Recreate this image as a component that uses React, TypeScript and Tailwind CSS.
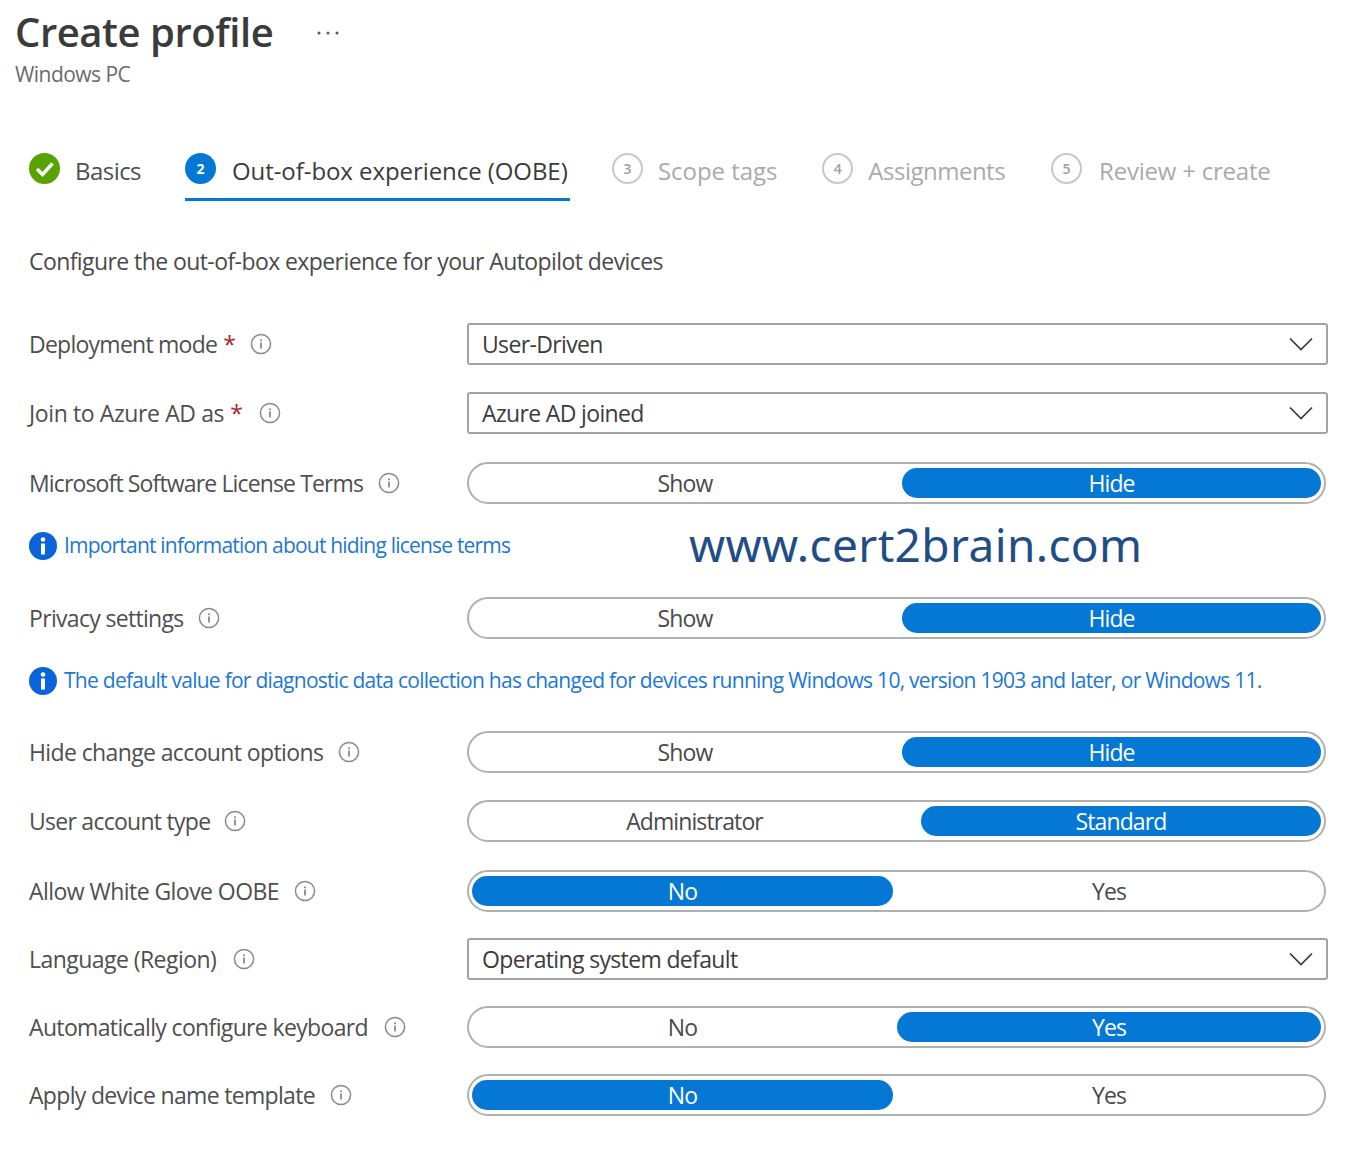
import { ReactNode } from 'react';

const BLUE = 'bg-[#0478d4]';

function InfoIcon() {
  return (
    <svg width="22" height="22" viewBox="0 0 22 22" className="shrink-0">
      <circle cx="11" cy="11" r="9.6" fill="none" stroke="#8a8a8a" strokeWidth="1.5" />
      <rect x="10.1" y="9.5" width="1.8" height="6" fill="#8a8a8a" />
      <rect x="10.1" y="6.4" width="1.8" height="1.8" fill="#8a8a8a" />
    </svg>
  );
}

function Label({ text, required, gap, tracking }: { text: string; required?: boolean; gap: string; tracking: string }) {
  return (
    <div className={`w-[438px] shrink-0 flex items-center text-[#4f4f4f] text-[23px] ${tracking}`}>
      <span>{text}</span>
      {required && <span className="ml-[6px] text-[#a4262c]">*</span>}
      <span className={gap}>
        <InfoIcon />
      </span>
    </div>
  );
}

function Row({ children, className }: { children: ReactNode; className: string }) {
  return <div className={`flex items-center ${className}`}>{children}</div>;
}

function Select({ value }: { value: string }) {
  return (
    <div className="w-[861px] h-[42px] border-2 border-[#a3a3a3] rounded-[3px] flex items-center justify-between pl-[13px] pr-[13px] text-[#3c3c3c] text-[23px] tracking-[-0.65px]">
      <span>{value}</span>
      <svg width="24" height="14" viewBox="0 0 24 14">
        <path d="M1 1.5 L12 12.5 L23 1.5" fill="none" stroke="#3a3a3a" strokeWidth="1.7" />
      </svg>
    </div>
  );
}

function Toggle({ left, right, active, split }: { left: string; right: string; active: 'left' | 'right'; split: number }) {
  const seg = 'h-full flex items-center justify-center text-[23px] tracking-[-0.9px]';
  const on = `${BLUE} text-white rounded-full`;
  return (
    <div className="w-[859px] h-[42px] border-2 border-[#b0b0b0] rounded-full py-[4px] px-[3px] flex">
      <div style={{ width: split }} className={`${seg} ${active === 'left' ? on : 'text-[#4a4a4a] pr-[4px]'}`}>{left}</div>
      <div className={`${seg} flex-1 ${active === 'right' ? on : 'text-[#4a4a4a] pl-[4px]'}`}>{right}</div>
    </div>
  );
}

function Notice({ children, className }: { children: ReactNode; className: string }) {
  return (
    <div className={`flex items-center text-[#1b78d6] text-[21px] ${className}`}>
      <svg width="28" height="28" viewBox="0 0 28 28" className="shrink-0 mr-[7px]">
        <circle cx="14" cy="14" r="14" fill="#0a63d8" />
        <rect x="12" y="11.5" width="4" height="11" fill="#fff" />
        <circle cx="14" cy="7.5" r="2.3" fill="#fff" />
      </svg>
      <span>{children}</span>
    </div>
  );
}

function Step({ n, label, className, gap }: { n: number; label: string; className: string; gap: string }) {
  return (
    <div className={`flex items-center h-[59px] pb-[2px] text-[#aaaaaa] text-[24px] ${className}`}>
      <span className="w-[31px] h-[31px] -mt-[4px] rounded-full border-2 border-[#c8c8c8] flex items-center justify-center text-[14px] font-semibold tracking-normal text-[#a0a0a0]">
        {n}
      </span>
      <span className={gap}>{label}</span>
    </div>
  );
}

export default function App() {
  return (
    <div className="relative w-[1358px] h-[1151px] bg-white overflow-hidden font-['Open_Sans','Noto_Sans',sans-serif]">
      <div className="pl-[15px] pt-[6px]">
        <div className="flex items-start">
          <h1 className="text-[40px] leading-[52px] font-semibold text-[#3b3b3b] tracking-[-0.45px]">Create profile</h1>
          <svg width="22" height="4" viewBox="0 0 22 4" className="ml-[44px] mt-[25px]">
            <circle cx="2" cy="2" r="1.5" fill="#5a5a5a" />
            <circle cx="11" cy="2" r="1.5" fill="#5a5a5a" />
            <circle cx="20" cy="2" r="1.5" fill="#5a5a5a" />
          </svg>
        </div>
        <p className="text-[21px] leading-[28px] mt-[2px] text-[#6b6b6b] tracking-[-0.55px]">Windows PC</p>
      </div>

      <div className="flex ml-[29px] mt-[54px] h-[60px]">
        <div className="flex items-center h-[59px] pb-[2px] text-[#4f4f4f] text-[24px] tracking-[-0.55px]">
          <svg width="31" height="31" viewBox="0 0 31 31" className="-mt-[4px]">
            <circle cx="15.5" cy="15.5" r="15.5" fill="#57a300" />
            <path d="M8 16 L13.5 21.5 L23.5 10.5" fill="none" stroke="#fff" strokeWidth="3.4" />
          </svg>
          <span className="ml-[15px]">Basics</span>
        </div>
        <div className="ml-[44px] w-[385px] h-[59px] pt-[2px] flex items-center border-b-[3px] border-[#0478d4] text-[#3b3b3b] text-[24px] tracking-[-0.07px] font-medium">
          <span className={`w-[31px] h-[31px] -mt-[6px] rounded-full ${BLUE} text-white flex items-center justify-center text-[14px] font-bold`}>2</span>
          <span className="ml-[16px] whitespace-nowrap">Out-of-box experience (OOBE)</span>
        </div>
        <Step n={3} label="Scope tags" className="ml-[42px] tracking-[-0.05px]" gap="ml-[15px]" />
        <Step n={4} label="Assignments" className="ml-[45px] tracking-[-0.5px]" gap="ml-[15px]" />
        <Step n={5} label="Review + create" className="ml-[46px] tracking-[-0.22px]" gap="ml-[17px]" />
      </div>

      <div className="pl-[29px] mt-[43px]">
        <p className="text-[23px] leading-[32px] text-[#4a4a4a] tracking-[-0.58px]">Configure the out-of-box experience for your Autopilot devices</p>

        <Row className="mt-[46px]"><Label text="Deployment mode" required gap="ml-[15px]" tracking="tracking-[-0.75px]" /><Select value="User-Driven" /></Row>
        <Row className="mt-[27px]"><Label text="Join to Azure AD as" required gap="ml-[17px]" tracking="tracking-[-0.39px]" /><Select value="Azure AD joined" /></Row>
        <Row className="mt-[28px]"><Label text="Microsoft Software License Terms" gap="ml-[15px]" tracking="tracking-[-0.86px]" /><Toggle left="Show" right="Hide" active="right" split={430} /></Row>
        <Notice className="mt-[27px] h-[30px] tracking-[-0.8px]">Important information about hiding license terms</Notice>
        <Row className="mt-[36px]"><Label text="Privacy settings" gap="ml-[14px]" tracking="tracking-[-0.68px]" /><Toggle left="Show" right="Hide" active="right" split={430} /></Row>
        <Notice className="mt-[27px] h-[30px] tracking-[-0.73px]">The default value for diagnostic data collection has changed for devices running Windows 10, version 1903 and later, or Windows 11.</Notice>
        <Row className="mt-[35px]"><Label text="Hide change account options" gap="ml-[15px]" tracking="tracking-[-0.62px]" /><Toggle left="Show" right="Hide" active="right" split={430} /></Row>
        <Row className="mt-[27px]"><Label text="User account type" gap="ml-[14px]" tracking="tracking-[-0.73px]" /><Toggle left="Administrator" right="Standard" active="right" split={449} /></Row>
        <Row className="mt-[28px]"><Label text="Allow White Glove OOBE" gap="ml-[15px]" tracking="tracking-[-0.55px]" /><Toggle left="No" right="Yes" active="left" split={421} /></Row>
        <Row className="mt-[26px]"><Label text="Language (Region)" gap="ml-[17px]" tracking="tracking-[-0.55px]" /><Select value="Operating system default" /></Row>
        <Row className="mt-[26px]"><Label text="Automatically configure keyboard" gap="ml-[16px]" tracking="tracking-[-0.65px]" /><Toggle left="No" right="Yes" active="right" split={425} /></Row>
        <Row className="mt-[26px]"><Label text="Apply device name template" gap="ml-[15px]" tracking="tracking-[-0.67px]" /><Toggle left="No" right="Yes" active="left" split={421} /></Row>
      </div>

      <div className="absolute left-[689px] top-[513px] text-[46px] leading-[62px] text-[#1f4e86] font-['Noto_Sans','Open_Sans',sans-serif] tracking-[0.38px]">www.cert2brain.com</div>
    </div>
  );
}
